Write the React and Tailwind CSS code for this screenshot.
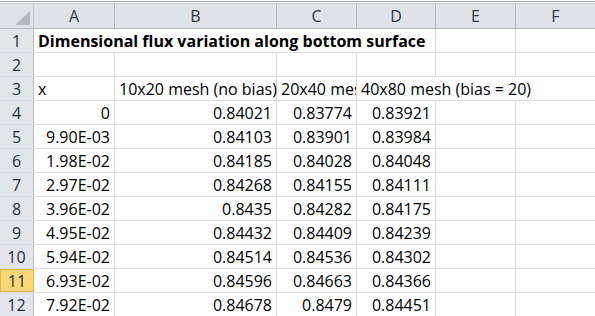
import React from "react";

const cols = [
  { key: "A", w: "w-[81px]" },
  { key: "B", w: "w-[162px]" },
  { key: "C", w: "w-[80px]" },
  { key: "D", w: "w-[79px]" },
  { key: "E", w: "w-[80px]" },
  { key: "F", w: "w-[80px]" },
];

const dados = [
  [4, "0", "0.84021", "0.83774", "0.83921"],
  [5, "9.90E-03", "0.84103", "0.83901", "0.83984"],
  [6, "1.98E-02", "0.84185", "0.84028", "0.84048"],
  [7, "2.97E-02", "0.84268", "0.84155", "0.84111"],
  [8, "3.96E-02", "0.8435", "0.84282", "0.84175"],
  [9, "4.95E-02", "0.84432", "0.84409", "0.84239"],
  [10, "5.94E-02", "0.84514", "0.84536", "0.84302"],
  [11, "6.93E-02", "0.84596", "0.84663", "0.84366"],
  [12, "7.92E-02", "0.84678", "0.8479", "0.84451"],
];

// celula comum da grade
const Cell = ({ w, children, right, className = "" }) => (
  <div
    className={`${w} shrink-0 h-full border-r border-[#dadcdd] flex items-end pb-[1px] leading-[20px] whitespace-nowrap ${
      right ? "justify-end pr-[4px]" : "pl-[4px]"
    } ${className}`}>
    {children}
  </div>
);

const RowHeader = ({ n, active }) => (
  <div
    className={`w-[34px] shrink-0 h-full flex items-center justify-center text-[#26303d] ${
      active
        ? "bg-[#fad87a] border border-[#f0b24c]"
        : "bg-[#e2e5e9] border-r border-[#b9bec5]"
    }`}>
    {n}
  </div>
);

const Row = ({ children, active }) => (
  <div
    className={`flex h-[24px] border-b ${
      active ? "border-[#f0b24c]" : "border-[#dadcdd]"
    }`}>
    {children}
  </div>
);

export default function App() {
  return (
    <div
      className="w-[595px] h-[316px] overflow-hidden bg-white text-[16px] text-black"
      style={{ fontFamily: "'Open Sans', Lato, sans-serif" }}>
      {/* linhas do topo */}
      <div className="h-px bg-white" />
      <div className="h-px bg-[#a7aaae]" />
      <div className="h-px bg-white" />
      <div className="h-px bg-[#cdd0d4]" />

      {/* cabeçalho das colunas */}
      <div className="flex h-[25px] bg-[#dfe3e8] border-b border-[#b4b9c0]">
        <div className="w-[34px] shrink-0 h-full border-r border-[#c4c8ce] flex items-end justify-end pr-[3px] pb-[3px]">
          <svg width="15" height="14" viewBox="0 0 15 14">
            <polygon points="0,14 15,14 15,0" fill="#b5bac1" />
          </svg>
        </div>
        {cols.map((c) => (
          <div
            key={c.key}
            className={`${c.w} shrink-0 h-full border-r border-[#b4b9c0] flex items-center justify-center text-[#2b3646]`}>
            {c.key}
          </div>
        ))}
      </div>

      {/* linha 1 */}
      <Row>
        <RowHeader n={1} />
        <Cell w="w-[402px]" className="font-bold">
          Dimensional flux variation along bottom surface
        </Cell>
        <Cell w="w-[80px]" />
        <Cell w="w-[80px]" />
      </Row>

      {/* linha 2 */}
      <Row>
        <RowHeader n={2} />
        {cols.map((c) => (
          <Cell key={c.key} w={c.w} />
        ))}
      </Row>

      {/* linha 3 */}
      <Row>
        <RowHeader n={3} />
        <Cell w="w-[81px]">x</Cell>
        <Cell w="w-[162px]">10x20 mesh (no bias)</Cell>
        <Cell w="w-[80px]" className="overflow-hidden">
          20x40 mesh (no bias)
        </Cell>
        <Cell w="w-[239px]">40x80 mesh (bias = 20)</Cell>
      </Row>

      {dados.map(([n, x, b, c, d]) => (
        <Row key={n}>
          <RowHeader n={n} active={n === 11} />
          <Cell w="w-[81px]" right>
            {x}
          </Cell>
          <Cell w="w-[162px]" right>
            {b}
          </Cell>
          <Cell w="w-[80px]" right>
            {c}
          </Cell>
          <Cell w="w-[79px]" right>
            {d}
          </Cell>
          <Cell w="w-[80px]" />
          <Cell w="w-[80px]" />
        </Row>
      ))}
    </div>
  );
}
